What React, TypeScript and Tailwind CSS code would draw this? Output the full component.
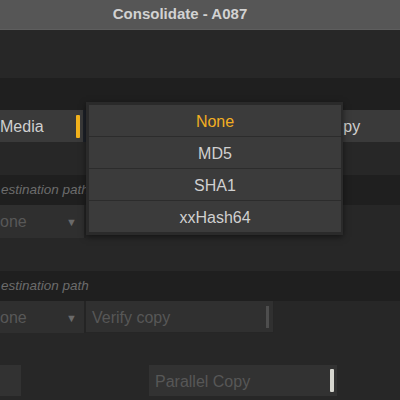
import { useState } from "react"

const hashOptions = ["None", "MD5", "SHA1", "xxHash64"]

function Caret() {
  return <span className="text-[11px] leading-none text-[#6a6a6a]">▼</span>
}

export default function App() {
  const [selected] = useState("None")

  return (
    <div
      className="relative w-[400px] h-[400px] overflow-hidden bg-[#272727] text-[16px]"
      style={{ fontFamily: '"Liberation Sans", Arial, sans-serif' }}
    >
      {/* Window title */}
      <div className="h-[30px] flex items-center justify-center bg-[#565656] border-b border-[#5e5e5e]">
        <span className="text-[15px] font-bold text-[#d2d2d2] pr-[40px]">Consolidate - A087</span>
      </div>

      <div className="h-[48px]" />
      <div className="h-[32px] bg-[#1f1f1f]" />

      {/* Source row */}
      <div className="h-[32px] flex bg-[#1f1f1f]">
        <div className="w-[83px] flex items-center justify-between bg-[#3a3a3a] pr-[3px] pt-[1px]">
          <span className="text-[#d0d0d0]">Media</span>
          <span className="w-[4px] h-[23px] rounded-[1px] bg-[#f2b21c]" />
        </div>
        <div className="w-[3px] bg-[#1d2128]" />
        <div className="flex-1 flex items-center bg-[#3a3a3a] pl-[196px] pt-[1px]">
          <span className="text-[#d0d0d0] whitespace-nowrap">Verify copy</span>
        </div>
      </div>

      <div className="h-[33px]" />

      {/* Destination 1 */}
      <div className="h-[30px] flex items-center bg-[#1f1f1f] pl-[1px]">
        <span className="text-[13.5px] italic text-[#6c6c6c] whitespace-nowrap">estination path</span>
      </div>
      <div className="h-[33px] flex">
        <div className="w-[84px] flex items-center justify-between bg-[#2f2f2f] pr-[7px] pt-[1px]">
          <span className="text-[#585858]">one</span>
          <Caret />
        </div>
        <div className="w-[2px] bg-[#242424]" />
      </div>

      <div className="h-[33px]" />

      {/* Destination 2 */}
      <div className="h-[30px] flex items-center bg-[#1f1f1f] pl-[1px]">
        <span className="text-[13.5px] italic text-[#6c6c6c] whitespace-nowrap">estination path</span>
      </div>
      <div className="h-[32px] flex">
        <div className="w-[84px] flex items-center justify-between bg-[#2f2f2f] pr-[7px] pt-[2px]">
          <span className="text-[#585858]">one</span>
          <Caret />
        </div>
        <div className="w-[2px] bg-[#242424]" />
        <div className="w-[188px] flex items-center justify-between bg-[#303030] pl-[6px] pr-[4px] border-b border-r border-[#262626]">
          <span className="text-[#575757] pt-[2px]">Verify copy</span>
          <span className="w-[3px] h-[22px] bg-[#4e4e4e]" />
        </div>
      </div>

      <div className="h-[32px]" />

      {/* Options row */}
      <div className="h-[31px] flex">
        <div className="w-[21px] bg-[#323232]" />
        <div className="w-[128px]" />
        <div className="w-[188px] flex items-center justify-between bg-[#323232] pl-[6px] pr-[3px]">
          <span className="text-[#575757] pt-[2px]">Parallel Copy</span>
          <span className="w-[4px] h-[23px] rounded-[1px] bg-[#d6d6cf]" />
        </div>
      </div>

      {/* Hash popup */}
      <div className="absolute left-[86px] top-[102px] w-[257px] p-[3px] pr-[2px] bg-[#2a2a2a] shadow-[0_2px_6px_rgba(0,0,0,0.5)]">
        <div className="flex flex-col gap-[1px] bg-[#2c2c2c]">
          {hashOptions.map((opt) => (
            <div
              key={opt}
              className={
                "h-[31px] flex items-center justify-center bg-[#3b3b3b] pt-[3px] " +
                (opt === selected ? "text-[#f2ae22]" : "text-[#d0d0d0]")
              }
            >
              {opt}
            </div>
          ))}
        </div>
      </div>
    </div>
  )
}
